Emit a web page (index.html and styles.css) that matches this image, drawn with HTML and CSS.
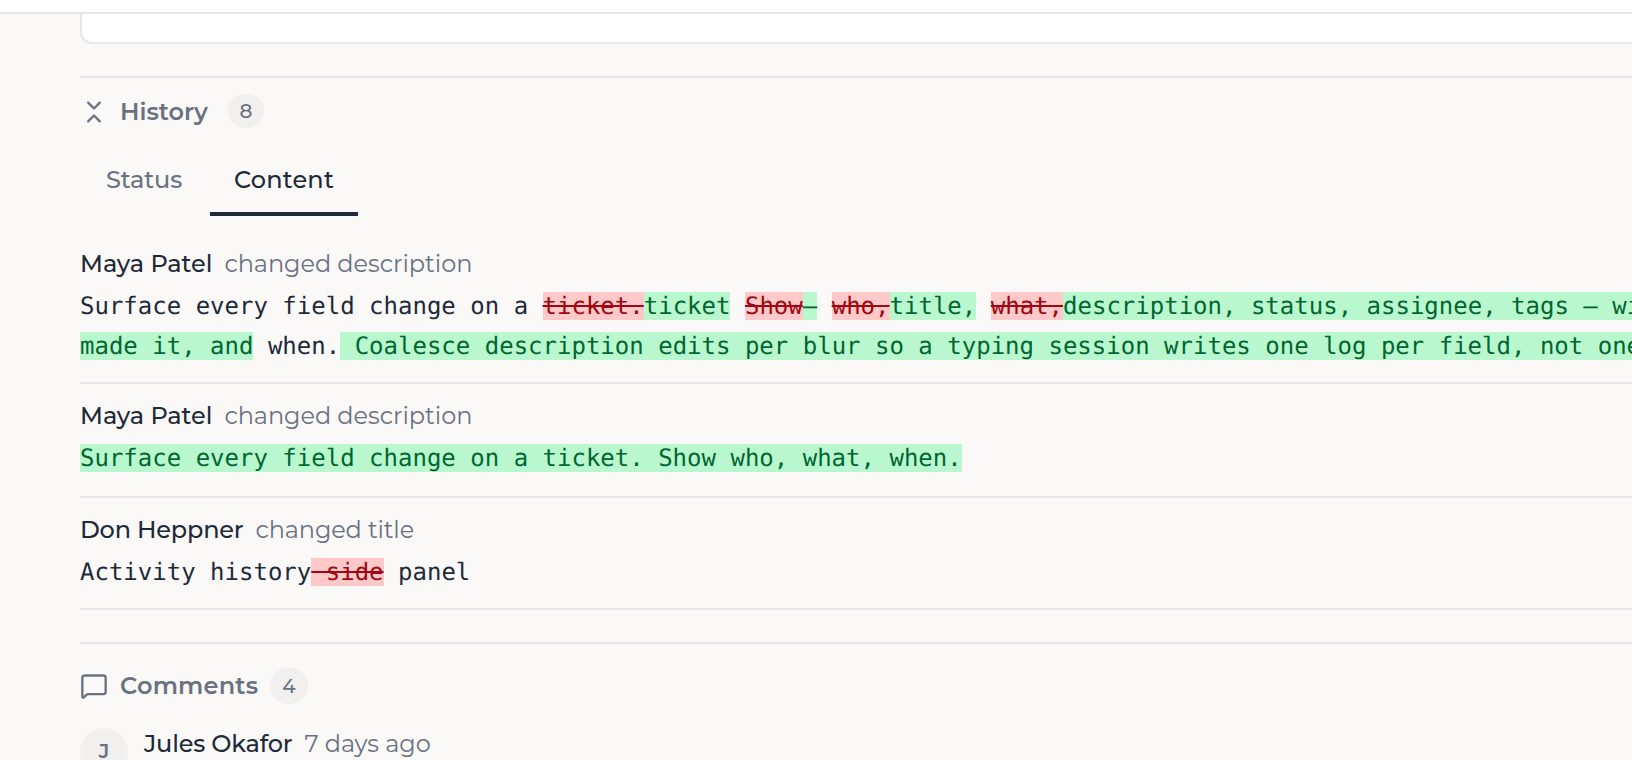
FILE: index.html
```
<!DOCTYPE html>
<html lang="en">
<head>
    <meta charset="UTF-8">
    <meta name="viewport" content="width=device-width, initial-scale=1.0">
    <title>Ticket History</title>
    <link rel="stylesheet" href="styles.css">
</head>
<body>
    <header class="topbar"></header>
    <main class="page">
        <div class="description-card"></div>

        <section class="history">
            <div class="section-title">
                <svg class="icon icon-history" viewBox="0 0 24 24"><path d="m7 20 5-5 5 5"/><path d="m7 4 5 5 5-5"/></svg>
                <h2 class="history-heading">History</h2>
                <span class="badge">8</span>
            </div>
            <div class="tabs">
                <button class="tab tab-status">Status</button>
                <button class="tab tab-content active">Content</button>
            </div>
            <ul class="log">
                <li class="entry entry-first">
                    <p class="meta"><span class="author">Maya Patel</span><span class="action">changed description</span></p>
                    <p class="diff">Surface every field change on a <del>ticket.</del><ins>ticket</ins> <del>Show</del><ins>—</ins> <del>who,</del><ins>title,</ins> <del>what,</del><ins>description, status, assignee, tags — with who made it, and</ins> when.<ins> Coalesce description edits per blur so a typing session writes one log per field, not one per key.</ins></p>
                </li>
                <li class="entry entry-second">
                    <p class="meta"><span class="author">Maya Patel</span><span class="action">changed description</span></p>
                    <p class="diff"><ins>Surface every field change on a ticket. Show who, what, when.</ins></p>
                </li>
                <li class="entry">
                    <p class="meta"><span class="author author-tight">Don Heppner</span><span class="action action-tight">changed title</span></p>
                    <p class="diff">Activity history<del> side</del> panel</p>
                </li>
            </ul>
        </section>

        <section class="comments">
            <div class="section-title">
                <svg class="icon" viewBox="0 0 24 24"><path d="M22 17a2 2 0 0 1-2 2H6.828a2 2 0 0 0-1.414.586l-2.202 2.202A.71.71 0 0 1 2 21.286V5a2 2 0 0 1 2-2h16a2 2 0 0 1 2 2z"/></svg>
                <h2 class="comments-heading">Comments</h2>
                <span class="badge badge-large">4</span>
            </div>
            <div class="comment">
                <span class="avatar">J</span>
                <p class="meta"><span class="author author-tight">Jules Okafor</span><span class="action">7 days ago</span></p>
            </div>
        </section>
    </main>
</body>
</html>
```
FILE: styles.css
```
* {
    box-sizing: border-box;
}
body {
    margin: 0;
    height: 760px;
    overflow: hidden;
    background: #faf9f7;
    color: #1e2939;
    font-family: Montserrat, Inter, sans-serif;
    font-size: 24px;
}
h2, p, ul {
    margin: 0;
    padding: 0;
}
.topbar {
    height: 14px;
    background: #fff;
    border-bottom: 2px solid #e5e7eb;
}
.page {
    width: 1780px;
    padding-left: 80px;
}
.description-card {
    height: 30px;
    margin-bottom: 32px;
    background: #fff;
    border: 2px solid #e5e7eb;
    border-top: none;
    border-radius: 0 0 12px 12px;
}
.history {
    height: 566px;
    border-top: 2px solid #e5e7eb;
    padding-top: 16px;
}
.section-title {
    display: flex;
    align-items: center;
    height: 34px;
    color: #6a7282;
}
.section-title h2 {
    font-size: 24px;
    font-weight: 600;
    line-height: 34px;
    margin-left: 12px;
    white-space: nowrap;
}
.section-title .history-heading {
    width: 90px;
    line-height: 32px;
    padding-top: 2px;
}
.comments-heading {
    width: 140px;
    letter-spacing: 0.2px;
}
.icon {
    width: 28px;
    height: 28px;
    fill: none;
    stroke: currentColor;
    stroke-width: 2;
    stroke-linecap: round;
    stroke-linejoin: round;
}
.icon-history {
    margin-top: 2px;
}
.badge {
    width: 36px;
    height: 34px;
    margin-left: 18px;
    border-radius: 18px;
    background: #f1f0ef;
    font-size: 20px;
    font-weight: 500;
    line-height: 34px;
    text-align: center;
}
.badge-large {
    width: 38px;
    height: 36px;
    margin-left: 10px;
    line-height: 36px;
}
.tabs {
    display: flex;
    gap: 4px;
    height: 72px;
    margin-top: 16px;
    padding: 0 2px;
}
.tab {
    height: 72px;
    padding: 2px 0 0 24px;
    border: none;
    border-bottom: 4px solid transparent;
    background: none;
    color: #6a7282;
    font: inherit;
    font-weight: 500;
    text-align: left;
    white-space: nowrap;
}
.tab-status {
    width: 124px;
    letter-spacing: -0.15px;
}
.tab-content {
    width: 148px;
    letter-spacing: 0.2px;
}
.tab.active {
    color: #1e2939;
    border-bottom-color: #1e2939;
}
.log {
    list-style: none;
    padding-top: 28px;
}
.entry {
    height: 112px;
    padding-top: 12px;
    border-bottom: 2px solid #e5e7eb;
}
.entry-first {
    height: 140px;
    padding-top: 0;
}
.entry-second {
    height: 114px;
}
.meta {
    display: flex;
    height: 40px;
    line-height: 40px;
    white-space: nowrap;
}
.author {
    font-weight: 500;
    letter-spacing: -0.04px;
}
.author-tight {
    letter-spacing: -0.2px;
}
.action {
    margin-left: 12px;
    color: #6a7282;
    letter-spacing: -0.06px;
}
.action-tight {
    letter-spacing: -0.12px;
}
.diff {
    font-family: "DejaVu Sans Mono", monospace;
    line-height: 40px;
    letter-spacing: 0.005px;
    padding-top: 2px;
    text-rendering: geometricPrecision;
}
ins {
    background: #b9f8cf;
    color: #016630;
    text-decoration: none;
}
del {
    background: #ffc9c9;
    color: #9f0712;
}
.comments {
    border-top: 2px solid #e5e7eb;
    padding-top: 25px;
}
.comment {
    display: flex;
    gap: 16px;
    margin-top: 25px;
}
.avatar {
    width: 48px;
    height: 48px;
    border-radius: 50%;
    background: #f1f0ef;
    color: #6a7282;
    font-size: 20px;
    font-weight: 600;
    line-height: 46px;
    text-align: center;
}
.comment .meta {
    height: 32px;
    line-height: 32px;
}
```
